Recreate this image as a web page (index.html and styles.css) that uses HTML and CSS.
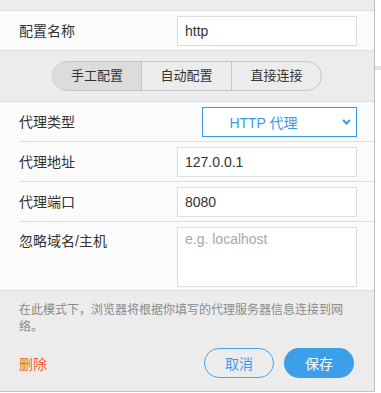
FILE: index.html
```html
<!DOCTYPE html>
<html lang="zh-CN">
<head>
    <meta charset="UTF-8">
    <title>代理设置</title>
    <link rel="stylesheet" href="styles.css">
</head>
<body>
    <div class="panel">
        <div class="top-bar"></div>

        <div class="row row-full">
            <span class="label">配置名称</span>
            <input class="field" type="text" value="http">
        </div>

        <div class="mode-bar">
            <div class="toggle">
                <span class="seg active">手工配置</span>
                <span class="seg">自动配置</span>
                <span class="seg">直接连接</span>
            </div>
        </div>

        <div class="row">
            <span class="label">代理类型</span>
            <div class="select">
                <span>HTTP 代理</span>
                <svg class="chevron" width="9" height="6" viewBox="0 0 9 6">
                    <path d="M1 1 L4.5 4.5 L8 1" fill="none" stroke="#3b9ae6" stroke-width="2"/>
                </svg>
            </div>
        </div>

        <div class="row">
            <span class="label">代理地址</span>
            <input class="field" type="text" value="127.0.0.1">
        </div>

        <div class="row">
            <span class="label">代理端口</span>
            <input class="field" type="text" value="8080">
        </div>

        <div class="row row-area">
            <span class="label">忽略域名/主机</span>
            <textarea class="field area" placeholder="e.g. localhost"></textarea>
        </div>

        <div class="footer">
            <p class="note">在此模式下，浏览器将根据你填写的代理服务器信息连接到网络。</p>
            <div class="actions">
                <a class="delete" href="#">删除</a>
                <div class="buttons">
                    <button class="btn btn-cancel">取消</button>
                    <button class="btn btn-save">保存</button>
                </div>
            </div>
        </div>
    </div>
    <div class="side">
        <div class="side-band"></div>
    </div>
</body>
</html>
```

FILE: styles.css
```css
body {
    margin: 0;
    background-color: #fff;
    font-family: "Liberation Sans", "Noto Sans CJK SC", sans-serif;
    color: #333;
    display: flex;
    align-items: flex-start;
}
.panel {
    width: 374px;
    border-right: 1px solid #bdbdbd;
    border-bottom: 1px solid #c4c4c4;
    background-color: #fbfbfb;
}
.top-bar {
    height: 10px;
    background-color: #ececec;
    border-bottom: 1px solid #dcdcdc;
}
.row {
    display: flex;
    justify-content: space-between;
    align-items: center;
    height: 39px;
    margin-left: 19px;
    padding-right: 17px;
    border-bottom: 1px solid #dedede;
}
.row-full {
    margin-left: 0;
    padding-left: 19px;
}
.label {
    font-size: 14px;
    line-height: 20px;
    color: #333;
}
.field {
    box-sizing: border-box;
    width: 180px;
    height: 30px;
    margin: 0;
    padding: 0 7px;
    border: 1px solid #dcdcdc;
    background-color: #fff;
    font-family: "Liberation Sans", "Noto Sans CJK SC", sans-serif;
    font-size: 14px;
    color: #333;
    outline: none;
}
.mode-bar {
    display: flex;
    justify-content: center;
    align-items: center;
    height: 50px;
    background-color: #ececec;
    border-bottom: 1px solid #dcdcdc;
}
.toggle {
    display: flex;
    border: 1px solid #c6c6c6;
    border-radius: 15px;
    overflow: hidden;
}
.seg {
    width: 89px;
    height: 28px;
    line-height: 28px;
    text-align: center;
    font-size: 13px;
    color: #333;
    border-left: 1px solid #c6c6c6;
}
.seg:first-child {
    border-left: none;
    width: 88px;
}
.seg.active {
    background-color: #dcdcdc;
}
.select {
    box-sizing: border-box;
    width: 155px;
    height: 30px;
    border: 1px solid #3b9ae6;
    background-color: #fff;
    display: flex;
    align-items: center;
    padding: 0 5px 0 0;
    color: #3b9ae6;
    font-size: 14px;
}
.select span {
    flex: 1;
    text-align: center;
    padding-right: 8px;
}
.chevron {
    margin-left: 10px;
}
.row-area {
    height: 68px;
    align-items: flex-start;
}
.row-area .label {
    padding-top: 9px;
}
.area {
    height: 60px;
    margin-top: 5px;
    padding: 3px 7px;
    resize: none;
}
.area::placeholder {
    color: #a8a8a8;
}
.footer {
    background-color: #ececec;
    border-top: 1px solid #dcdcdc;
    margin-top: -1px;
    padding: 11px 17px 13px 19px;
}
.note {
    margin: 0;
    font-size: 12px;
    line-height: 17px;
    color: #8a8a8a;
}
.actions {
    display: flex;
    justify-content: space-between;
    align-items: center;
    margin-top: 12px;
}
.delete {
    font-size: 14px;
    color: #f5632d;
    text-decoration: none;
}
.buttons {
    display: flex;
    gap: 10px;
    margin-right: 3px;
}
.btn {
    box-sizing: border-box;
    width: 70px;
    height: 30px;
    border-radius: 15px;
    font-family: "Liberation Sans", "Noto Sans CJK SC", sans-serif;
    font-size: 14px;
    cursor: pointer;
}
.btn-cancel {
    background-color: transparent;
    border: 1px solid #4aa3e8;
    color: #3b9ae6;
}
.btn-save {
    background-color: #3d9fe8;
    border: none;
    color: #fff;
}
.side {
    flex: 1;
    padding-top: 66px;
}
.side-band {
    height: 4px;
    background-color: #e6e6e6;
}
```
